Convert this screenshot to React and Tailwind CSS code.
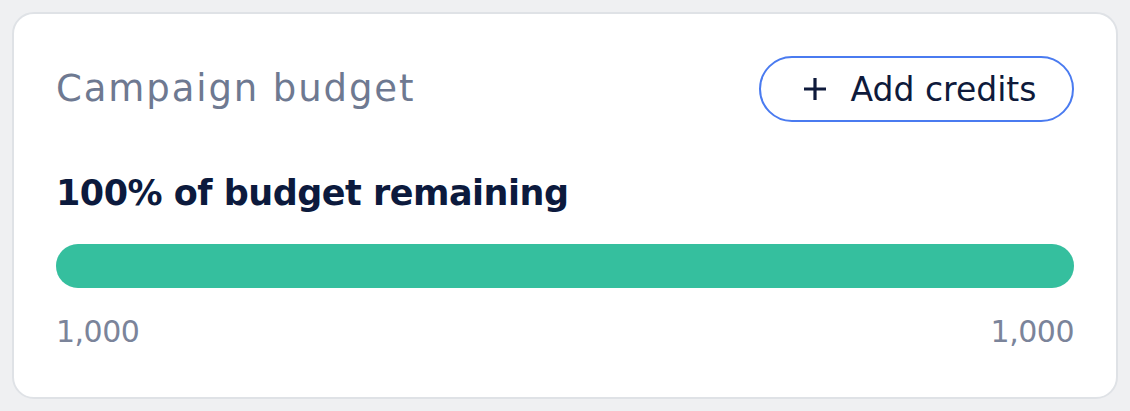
import React from "react";

const Plus = () => (
  <svg width="24" height="24" viewBox="0 0 24 24" fill="none" stroke="currentColor" strokeWidth="3.2">
    <path d="M12 1v22M1 12h22" />
  </svg>
);

const App = () => {
  const remaining = 1000;
  const total = 1000;
  const pct = Math.round((remaining / total) * 100);

  return (
    <div className="min-h-screen bg-[#eff0f2] p-3 font-['DejaVu_Sans',sans-serif]">
      <div className="h-[387px] rounded-[22px] border-2 border-[#dfe2e6] bg-white px-[42px] pt-[42px]">
        <div className="flex items-center justify-between">
          <h2 className="text-[37px] font-normal tracking-[1.9px] text-[#6e7991]">Campaign budget</h2>
          <button className="flex h-[66px] w-[315px] items-center justify-center gap-6 rounded-full border-2 border-[#4a7bf0] pl-[6px] text-[#0e1a3b]">
            <Plus />
            <span className="text-[33px] font-normal leading-none">Add credits</span>
          </button>
        </div>

        <p className="mt-[49px] text-[35px] font-bold leading-[44px] tracking-[-0.5px] text-[#0c1a3d]">{pct}% of budget remaining</p>

        <div className="mt-[29px] h-[44px] w-full rounded-full bg-[#ebeef2]">
          <div className="h-full rounded-full bg-[#35bf9e]" style={{ width: `${pct}%` }} />
        </div>

        <div className="mt-[26px] flex justify-between text-[30px] leading-[36px] tracking-[-0.5px] text-[#7b849a]">
          <span>1,000</span>
          <span>1,000</span>
        </div>
      </div>
    </div>
  );
};

export default App;
